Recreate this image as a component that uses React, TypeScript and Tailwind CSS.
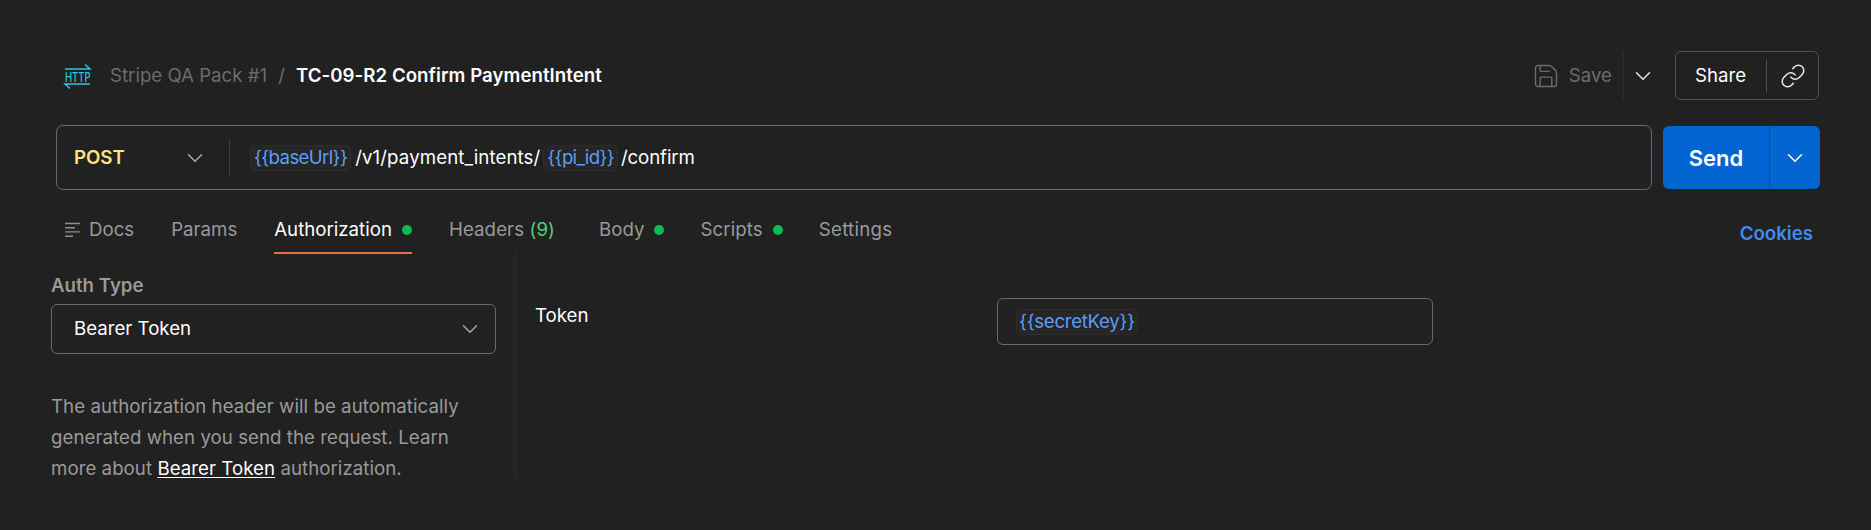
import { ChevronDown, Link, Save } from "lucide-react";

// Small {{variable}} chip used inside the url bar and the token input.
function VarChip({ name, className }: { name: string; className: string }) {
  return (
    <span className={`inline-block rounded-[5px] border border-[#2d2d2d] bg-[#262626] leading-[24px] text-[#5a9ff5] ${className}`}>
      {"{{"}
      {name}
      {"}}"}
    </span>
  );
}

function Dot() {
  return <span className="ml-[10px] h-[10px] w-[10px] rounded-full bg-[#0cbb52]" />;
}

function Chevron({ className }: { className: string }) {
  return <ChevronDown size={26} strokeWidth={1.4} className={className} />;
}

function HttpIcon() {
  return (
    <svg width="27" height="26" viewBox="0 0 27 26" fill="none" stroke="#2cc6dc" strokeWidth="1.5" className="overflow-visible">
      <path d="M1 6H26L21 1.5" />
      <path d="M26 21H1L6 25.5" />
      <text
        transform="translate(1 18.5) scale(0.76 1)"
        fill="#2cc6dc"
        stroke="none"
        fontSize="12.5"
        fontWeight="500"
        fontFamily="Inter, sans-serif"
      >
        HTTP
      </text>
    </svg>
  );
}

function DocsIcon() {
  return (
    <svg width="17" height="16" viewBox="0 0 17 16" fill="none" stroke="#8f8f8f" strokeWidth="1.4">
      <path d="M1 1.5H16M1 5.7H11M1 9.9H16M1 14.3H9" />
    </svg>
  );
}

export default function App() {
  return (
    <div className="h-[530px] w-full overflow-hidden bg-[#212121] px-[51px] pt-[51px] font-['Inter',sans-serif] text-[18.67px] leading-[24px] text-white">
      {/* breadcrumb + save/share */}
      <div className="flex h-[49px] items-center pl-[13px]">
        <HttpIcon />
        <span className="ml-[19px] text-[#6b6b6b]">Stripe QA Pack #1</span>
        <span className="ml-[11px] text-[#6b6b6b]">/</span>
        <span className="ml-[11px] font-semibold tracking-[0.05px]">TC-09-R2 Confirm PaymentIntent</span>

        <div className="ml-auto mr-px flex items-center">
          <Save size={28} strokeWidth={1.2} className="text-[#6b6b6b]" />
          <span className="ml-[9px] text-[#6b6b6b]">Save</span>
          <div className="ml-[11px] flex h-[49px] w-[52px] items-center border-l border-[#2e2e2e] pl-[6px]">
            <Chevron className="text-[#e5e5e5]" />
          </div>
          <div className="flex h-[49px] w-[144px] items-center rounded-[6px] border border-[#525252]">
            <span className="ml-[19px] w-[71px]">Share</span>
            <span className="h-[32px] w-px bg-[#525252]" />
            <Link size={26} strokeWidth={1.4} className="ml-[13px] text-[#e8e8e8]" />
          </div>
        </div>
      </div>

      {/* url bar */}
      <div className="mt-[25px] flex h-[65px] items-center">
        <div className="ml-[5px] flex h-[65px] flex-1 items-center rounded-[7px] border border-[#6a6a6a]">
          <span className="ml-[17px] w-[108px] font-semibold text-[#ffe47e]">POST</span>
          <Chevron className="text-[#a6a6a6]" />
          <span className="ml-[21px] h-[38px] w-px bg-[#3c3c3c]" />
          <div className="ml-[20px] flex items-center whitespace-pre">
            <VarChip name="baseUrl" className="px-[3px] tracking-[-0.65px]" />
            <span className="ml-[4px] tracking-[0.1px]">/v1/payment_intents/</span>
            <span className="ml-[3px]"><VarChip name="pi_id" className="px-[3px] tracking-[-0.7px]" /></span>
            <span className="ml-[3px] tracking-[-0.1px]">/confirm</span>
          </div>
        </div>
        <div className="ml-[11px] flex h-[63px] w-[157px] items-center rounded-[6px] bg-[#0265d2]">
          <span className="w-[106px] text-center text-[22px] font-semibold">Send</span>
          <span className="h-full w-px bg-[#0a4f9c]" />
          <Chevron className="ml-[12px]" />
        </div>
      </div>

      {/* tabs */}
      <div className="mt-[20px] flex h-[43px] items-start pt-[8px] text-[#9a9a9a]">
        <span className="ml-[13px] flex h-[24px] items-center"><DocsIcon /></span>
        <span className="ml-[8px]">Docs</span>
        <span className="ml-[37px]">Params</span>
        <div className="relative ml-[37px] flex h-[24px] items-center text-white">
          Authorization
          <Dot />
          <span className="absolute left-0 right-0 top-[34px] h-[2px] bg-[#f26b3a]" />
        </div>
        <span className="ml-[37px] tracking-[0.1px]">
          Headers <span className="text-[#4fd07f]">(9)</span>
        </span>
        <div className="ml-[44px] flex h-[24px] items-center">Body<Dot /></div>
        <div className="ml-[36px] flex h-[24px] items-center tracking-[0.1px]">Scripts<Dot /></div>
        <span className="ml-[36px] tracking-[0.25px]">Settings</span>
        <span className="ml-auto mr-[7px] mt-[4px] font-semibold text-[#3f8cf0]">Cookies</span>
      </div>

      {/* auth panel */}
      <div className="flex">
        <div className="h-[225px] w-[465px] border-r border-[#2e2e2e] pr-[19px] pt-[22px]">
          <div className="font-semibold leading-[22px] text-[#9a9a9a]">Auth Type</div>
          <div className="mt-[7px] flex h-[50px] items-center justify-between rounded-[6px] border border-[#6a6a6a] pl-[22px] pr-[12px]">
            <span>Bearer Token</span>
            <Chevron className="text-[#a6a6a6]" />
          </div>
          <p className="mt-[37px] leading-[31px] tracking-[0.05px] text-[#9a9a9a]">
            The authorization header will be automatically generated when you send the request. Learn more about{" "}
            <span className="text-white underline underline-offset-2">Bearer Token</span> authorization.
          </p>
        </div>
        <div className="flex items-start">
          <span className="ml-[19px] mt-[51px] w-[462px]">Token</span>
          <div className="mt-[45px] flex h-[47px] w-[436px] items-center rounded-[6px] border border-[#6a6a6a] pl-[18px]">
            <VarChip name="secretKey" className="px-[2px] tracking-[-0.3px]" />
          </div>
        </div>
      </div>
    </div>
  );
}
